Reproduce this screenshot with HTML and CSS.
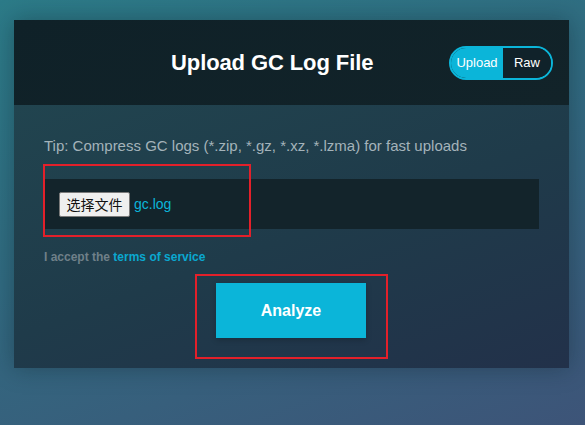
FILE: index.html
```html
<!DOCTYPE html>
<html>
<head>
<meta charset="utf-8">
<link rel="stylesheet" href="styles.css">
</head>
<body>
<div class="card">
  <div class="header">
    <h1 class="title">Upload GC Log File</h1>
    <div class="toggle">
      <span class="seg seg-on">Upload</span>
      <span class="seg seg-off">Raw</span>
    </div>
  </div>
  <div class="content">
    <p class="tip">Tip: Compress GC logs (*.zip, *.gz, *.xz, *.lzma) for fast uploads</p>
    <div class="filebox">
      <span class="filebtn">选择文件</span>
      <span class="filename">gc.log</span>
      <span class="mark mark-file"></span>
    </div>
    <p class="terms">I accept the <span class="link">terms of service</span></p>
    <div class="action">
      <div class="action-mark">
        <button class="analyze">Analyze</button>
      </div>
    </div>
  </div>
</div>
</body>
</html>
```

FILE: styles.css
```css
html, body {
  margin: 0;
  height: 100%;
}
body {
  background: linear-gradient(160deg, #2c7b88 0%, #316a80 45%, #3d5478 100%);
  font-family: "Liberation Sans", Arial, Helvetica, sans-serif;
  padding: 20px 16px 0 14px;
  box-sizing: border-box;
  overflow: hidden;
}
.card {
  width: 555px;
  height: 348px;
  display: flex;
  flex-direction: column;
  box-shadow: 0 0 22px rgba(10, 25, 35, 0.35);
}
.header {
  height: 85px;
  flex: none;
  background: linear-gradient(160deg, #0f2128, #122329);
  display: flex;
  align-items: center;
  padding: 0 16px 0 157px;
}
.title {
  margin: 0;
  font-size: 22px;
  font-weight: bold;
  color: #ffffff;
  letter-spacing: -0.1px;
}
.toggle {
  margin-left: auto;
  display: flex;
  width: 104px;
  height: 34px;
  box-sizing: border-box;
  border: 2px solid #0bb5d9;
  border-radius: 17px;
  overflow: hidden;
}
.seg {
  display: flex;
  align-items: center;
  justify-content: center;
  font-size: 13px;
  color: #ffffff;
}
.seg-on {
  width: 52px;
  background: #0bb5d9;
}
.seg-off {
  flex: 1;
  background: #10222a;
}
.content {
  flex: 1;
  background: linear-gradient(160deg, #21444f 0%, #1f3b4a 50%, #22314a 100%);
  padding: 31px 30px 9px 30px;
  display: flex;
  flex-direction: column;
}
.tip {
  margin: 0;
  font-size: 15px;
  line-height: 20px;
  color: #a4b3ba;
}
.filebox {
  position: relative;
  margin-top: 23px;
  height: 50px;
  background: #13242b;
  display: flex;
  align-items: center;
  padding-left: 15px;
}
.filebtn {
  width: 71px;
  height: 25px;
  box-sizing: border-box;
  border: 1px solid #7a7a7a;
  border-radius: 2px;
  background: #efefef;
  color: #111;
  font-family: "Noto Sans CJK SC", sans-serif;
  font-size: 14px;
  display: flex;
  align-items: center;
  justify-content: center;
}
.filename {
  margin-left: 4px;
  font-size: 14px;
  color: #0bb5d9;
}
.mark {
  position: absolute;
  border: 2px solid #e3202a;
}
.mark-file {
  left: -1px;
  top: -15px;
  width: 204px;
  height: 69px;
}
.terms {
  margin: 20px 0 0 0;
  font-size: 12px;
  line-height: 16px;
  font-weight: bold;
  color: #6f8089;
}
.link {
  color: #0aa8d0;
}
.action {
  margin-top: 9px;
  display: flex;
  justify-content: center;
}
.action-mark {
  border: 2px solid #e3202a;
  padding: 7px 20px 19px 19px;
}
.analyze {
  display: block;
  width: 150px;
  height: 55px;
  border: none;
  background: #0bb5d9;
  color: #ffffff;
  font-family: "Liberation Sans", Arial, sans-serif;
  font-weight: bold;
  font-size: 16px;
  box-shadow: 0 2px 6px rgba(0,0,0,0.2);
}
```
